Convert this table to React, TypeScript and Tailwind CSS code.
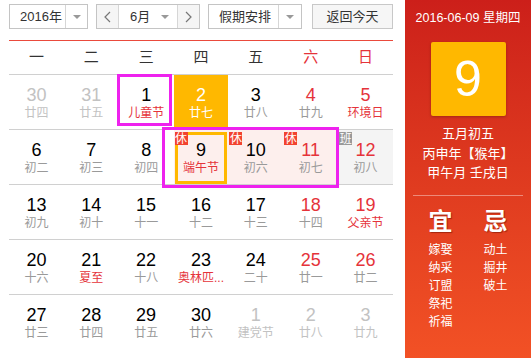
import { ReactNode } from "react";

type Day = {
  n: number;
  lunar: string;
  other?: boolean;
  red?: boolean;
  fest?: boolean;
  selected?: boolean;
  today?: boolean;
  badge?: "休" | "班";
  tint?: "pink" | "gray";
};

const weeks: Day[][] = [
  [
    { n: 30, lunar: "廿四", other: true },
    { n: 31, lunar: "廿五", other: true },
    { n: 1, lunar: "儿童节", fest: true },
    { n: 2, lunar: "廿七", selected: true },
    { n: 3, lunar: "廿八" },
    { n: 4, lunar: "廿九", red: true },
    { n: 5, lunar: "环境日", red: true, fest: true },
  ],
  [
    { n: 6, lunar: "初二" },
    { n: 7, lunar: "初三" },
    { n: 8, lunar: "初四" },
    { n: 9, lunar: "端午节", fest: true, today: true, badge: "休", tint: "pink" },
    { n: 10, lunar: "初六", badge: "休", tint: "pink" },
    { n: 11, lunar: "初七", red: true, badge: "休", tint: "pink" },
    { n: 12, lunar: "初八", red: true, badge: "班", tint: "gray" },
  ],
  [
    { n: 13, lunar: "初九" },
    { n: 14, lunar: "初十" },
    { n: 15, lunar: "十一" },
    { n: 16, lunar: "十二" },
    { n: 17, lunar: "十三" },
    { n: 18, lunar: "十四", red: true },
    { n: 19, lunar: "父亲节", red: true, fest: true },
  ],
  [
    { n: 20, lunar: "十六" },
    { n: 21, lunar: "夏至", fest: true },
    { n: 22, lunar: "十八" },
    { n: 23, lunar: "奥林匹...", fest: true },
    { n: 24, lunar: "二十" },
    { n: 25, lunar: "廿一", red: true },
    { n: 26, lunar: "廿二", red: true },
  ],
  [
    { n: 27, lunar: "廿三" },
    { n: 28, lunar: "廿四" },
    { n: 29, lunar: "廿五" },
    { n: 30, lunar: "廿六" },
    { n: 1, lunar: "建党节", other: true },
    { n: 2, lunar: "廿八", other: true },
    { n: 3, lunar: "廿九", other: true },
  ],
];

const weekdays = ["一", "二", "三", "四", "五", "六", "日"];
const yi = ["嫁娶", "纳采", "订盟", "祭祀", "祈福"];
const ji = ["动土", "掘井", "破土"];

function Caret() {
  return <span className="h-0 w-0 border-x-[4px] border-t-[4px] border-x-transparent border-t-[#999]" />;
}

function Chevron({ dir }: { dir: "left" | "right" }) {
  return (
    <svg width="7" height="12" viewBox="0 0 7 12" fill="none" stroke="#777" strokeWidth="1.2">
      {dir === "left" ? <polyline points="6,1 1,6 6,11" /> : <polyline points="1,1 6,6 1,11" />}
    </svg>
  );
}

function Select({ w, divider, children }: { w: string; divider: string; children: ReactNode }) {
  return (
    <div className={`flex h-[25px] ${w} border border-[#c4c4c4] bg-white text-[13px] text-[#333]`}>
      <div className={`flex ${divider} items-center pl-[10px]`}>{children}</div>
      <div className="flex flex-1 items-center justify-center border-l border-[#d6d6d6]">
        <Caret />
      </div>
    </div>
  );
}

function Cell({ d }: { d: Day }) {
  let bg = "";
  if (d.selected) bg = "bg-[#ffb800]";
  else if (d.tint === "pink") bg = "bg-[#fdefed]";
  else if (d.tint === "gray") bg = "bg-[#f4f4f4]";

  let numColor = "text-black";
  if (d.other) numColor = "text-[#c2c2c2]";
  else if (d.selected) numColor = "text-white";
  else if (d.red) numColor = "text-[#e5333a]";

  let lunarColor = "text-[#9a9a9a]";
  if (d.other) lunarColor = "text-[#c2c2c2]";
  else if (d.selected) lunarColor = "text-white";
  else if (d.fest) lunarColor = "text-[#e5333a]";

  return (
    <div className={`relative flex h-[54px] flex-col items-center pt-[10px] ${bg}`}>
      {d.today && (
        <div className="absolute inset-x-px bottom-0 top-[2px] border-[3px] border-[#ffb800]" />
      )}
      {d.badge && (
        <span
          className={`absolute left-px top-[2px] z-10 flex h-[13px] w-[13px] items-center justify-center text-[12px] leading-none text-white ${
            d.badge === "休" ? "bg-[#f2432f]" : "bg-[#999999]"
          }`}
        >
          {d.badge}
        </span>
      )}
      <span className={`relative text-[18px] leading-[20px] ${numColor}`}>{d.n}</span>
      <span className={`relative whitespace-nowrap text-[12px] leading-[16px] ${lunarColor}`}>{d.lunar}</span>
    </div>
  );
}

export default function App() {
  return (
    <div className="flex h-[358px] w-[531px] overflow-hidden bg-white font-['Liberation_Sans','Noto_Sans_CJK_SC',sans-serif]">
      <div className="w-[405px] pl-[9px] pr-[12px] pt-[4px]">
        <div className="flex items-center">
          <Select w="w-[79px]" divider="w-[55px]">
            2016年
          </Select>
          <div className="ml-[8px] flex h-[25px] w-[104px] border border-[#c4c4c4] text-[13px] text-[#333]">
            <div className="flex w-[21px] items-center justify-center bg-[#f5f5f5]">
              <Chevron dir="left" />
            </div>
            <div className="flex w-[60px] items-center justify-between border-x border-[#d6d6d6] bg-white pl-[11px] pr-[8px]">
              6月
              <Caret />
            </div>
            <div className="flex flex-1 items-center justify-center bg-[#f5f5f5]">
              <Chevron dir="right" />
            </div>
          </div>
          <div className="ml-[8px]">
            <Select w="w-[94px]" divider="w-[69px]">
              假期安排
            </Select>
          </div>
          <button className="ml-[10px] flex h-[25px] w-[81px] items-center justify-center border border-[#c8c8c8] bg-[#f6f6f6] text-[13px] text-[#333]">
            返回今天
          </button>
        </div>

        <div className="mt-[11px] border-t border-[#ea4a3c]">
          <div className="grid h-[33px] grid-cols-7 items-center text-center text-[15px]">
            {weekdays.map((w, i) => (
              <span key={w} className={i >= 5 ? "text-[#e5333a]" : "text-[#333]"}>
                {w}
              </span>
            ))}
          </div>
          <div className="relative">
            {weeks.map((week, i) => (
              <div key={i} className="grid grid-cols-7 border-t border-[#d0d0d0]">
                {week.map((d, j) => (
                  <Cell key={j} d={d} />
                ))}
              </div>
            ))}
            <div className="absolute left-[108px] top-0 h-[52px] w-[55px] border-[3px] border-[#ee22ee]" />
            <div className="absolute left-[153px] top-[53px] h-[61px] w-[177px] border-[3px] border-[#ee22ee]" />
          </div>
        </div>
      </div>

      <div className="flex w-[126px] flex-col items-center bg-gradient-to-b from-[#cc1f1a] to-[#f25125] text-white">
        <div className="mt-[10px] whitespace-nowrap text-[12.5px] leading-[16px]">2016-06-09 星期四</div>
        <div className="mt-[16px] flex h-[74px] w-[75px] items-center justify-center rounded-[2px] bg-[#ffb800] text-[50px] leading-none shadow-[0_1px_3px_rgba(0,0,0,0.25)]">
          9
        </div>
        <div className="mt-[8px] flex flex-col items-center text-[13px] leading-[19.5px]">
          <span>五月初五</span>
          <span>丙申年【猴年】</span>
          <span>甲午月 壬戌日</span>
        </div>
        <div className="mt-[12px] h-px w-[110px] bg-white/40" />
        <div className="mt-[12px] flex w-full justify-center gap-[31px]">
          <div className="flex flex-col items-center">
            <span className="text-[24px] font-bold leading-[28px] [text-shadow:1px_1px_1px_rgba(120,20,0,0.6)]">宜</span>
            <div className="mt-[5px] flex flex-col text-[12px] leading-[18px]">
              {yi.map((t) => (
                <span key={t}>{t}</span>
              ))}
            </div>
          </div>
          <div className="flex flex-col items-center">
            <span className="text-[24px] font-bold leading-[28px] [text-shadow:1px_1px_1px_rgba(120,20,0,0.6)]">忌</span>
            <div className="mt-[5px] flex flex-col text-[12px] leading-[18px]">
              {ji.map((t) => (
                <span key={t}>{t}</span>
              ))}
            </div>
          </div>
        </div>
      </div>
    </div>
  );
}
